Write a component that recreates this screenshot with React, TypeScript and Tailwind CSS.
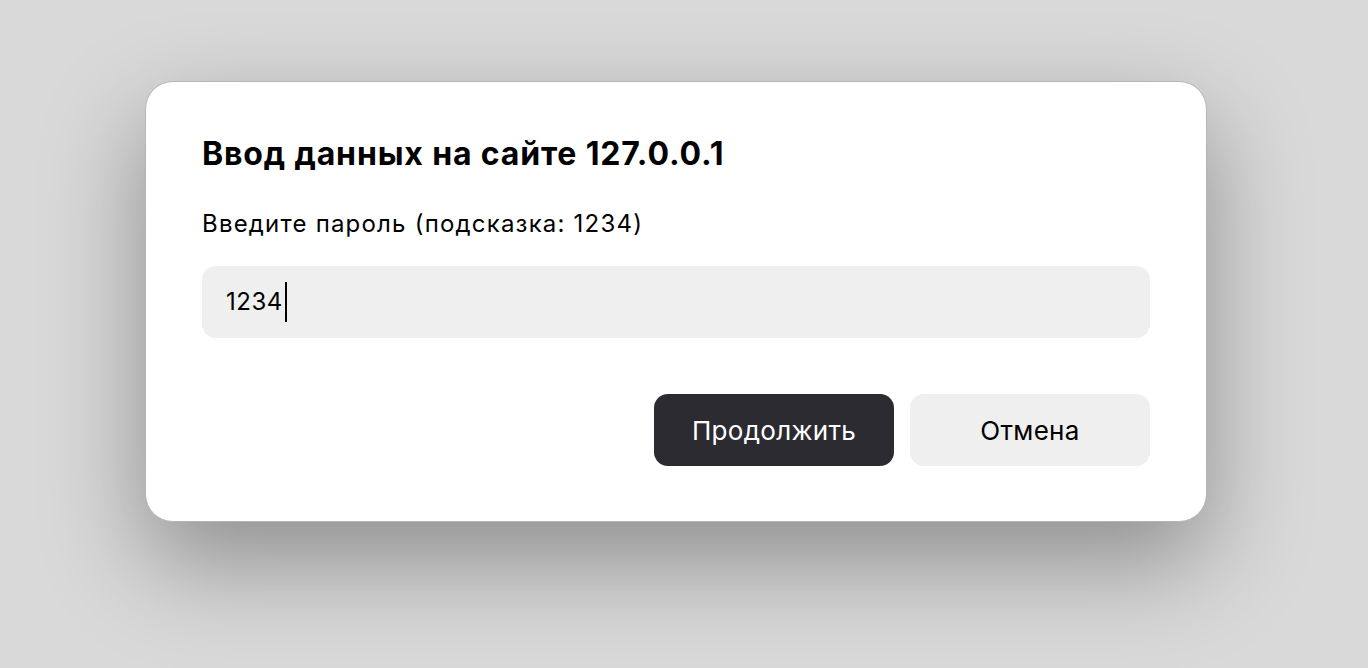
export default function App() {
  return (
    <div className="min-h-[668px] w-full bg-[#d9d9d9] pt-[81px] pl-[145px] font-['Inter',sans-serif] text-black">
      <div className="w-[1062px] rounded-[28px] border border-[#b5b5b5] bg-white px-[56px] pb-[55px] pt-[52px] shadow-[0_40px_100px_rgba(0,0,0,0.35)]">
        <h1 className="text-[32px] font-bold leading-[40px] tracking-[0.85px]">Ввод данных на сайте 127.0.0.1</h1>
        <p className="mt-[35px] text-[24px] leading-[30px] tracking-[1.2px]">Введите пароль (подсказка: 1234)</p>
        <div className="mt-[27px] flex h-[72px] items-center rounded-[14px] bg-[#efefef] px-[24px]">
          <span className="text-[24px] leading-none tracking-[0.5px]">1234</span>
          <span className="ml-[2px] h-[40px] w-[2px] bg-black" />
        </div>
        <div className="mt-[56px] flex justify-end gap-[16px]">
          <button className="h-[72px] w-[240px] rounded-[14px] bg-[#2c2b31] text-[26px] tracking-[0.3px] text-white">
            Продолжить
          </button>
          <button className="h-[72px] w-[240px] rounded-[14px] bg-[#efefef] text-[26px] tracking-[0.3px] text-black">
            Отмена
          </button>
        </div>
      </div>
    </div>
  );
}
